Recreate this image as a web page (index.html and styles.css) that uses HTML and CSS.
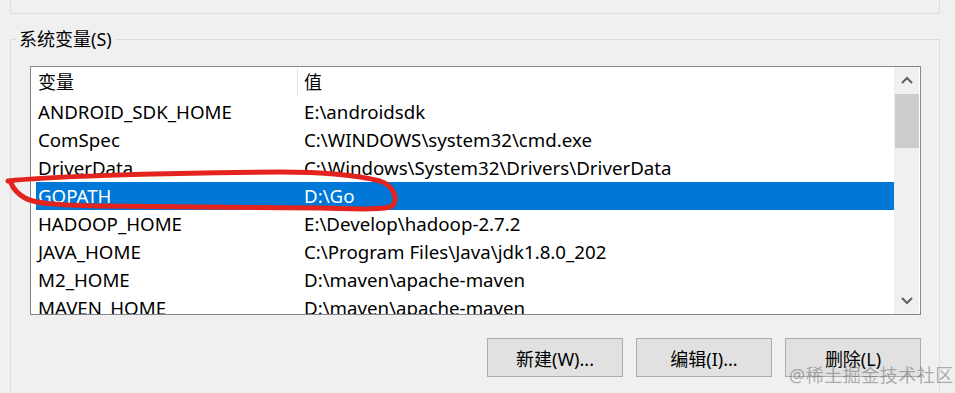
FILE: index.html
```html
<!DOCTYPE html>
<html lang="zh-CN">
<head>
    <meta charset="UTF-8">
    <title>环境变量</title>
    <link rel="stylesheet" href="styles.css">
</head>
<body>

<div class="prev-group"></div>

<fieldset class="group">
    <legend>系统变量(S)</legend>
    <div class="group-body">
        <div class="listbox">
            <div class="list-content">
                <div class="list-header">
                    <div class="hcell">变量</div>
                    <div class="hcell val">值</div>
                </div>
                <div class="row"><div class="cell">ANDROID_SDK_HOME</div><div class="cell">E:\androidsdk</div></div>
                <div class="row"><div class="cell">ComSpec</div><div class="cell">C:\WINDOWS\system32\cmd.exe</div></div>
                <div class="row"><div class="cell">DriverData</div><div class="cell">C:\Windows\System32\Drivers\DriverData</div></div>
                <div class="row selected"><div class="cell">GOPATH</div><div class="cell">D:\Go</div></div>
                <div class="row"><div class="cell">HADOOP_HOME</div><div class="cell">E:\Develop\hadoop-2.7.2</div></div>
                <div class="row"><div class="cell">JAVA_HOME</div><div class="cell">C:\Program Files\Java\jdk1.8.0_202</div></div>
                <div class="row"><div class="cell">M2_HOME</div><div class="cell">D:\maven\apache-maven</div></div>
                <div class="row"><div class="cell">MAVEN_HOME</div><div class="cell">D:\maven\apache-maven</div></div>
            </div>
            <div class="scrollbar">
                <div class="sb-btn">
                    <svg width="12" height="8" viewBox="0 0 12 8"><path d="M1 7 L6 2 L11 7" fill="none" stroke="#606060" stroke-width="2"/></svg>
                </div>
                <div class="sb-thumb"></div>
                <div class="sb-track"></div>
                <div class="sb-btn">
                    <svg width="12" height="8" viewBox="0 0 12 8"><path d="M1 1 L6 6 L11 1" fill="none" stroke="#606060" stroke-width="2"/></svg>
                </div>
            </div>
        </div>

        <div class="buttons">
            <button class="btn">新建(W)...</button>
            <button class="btn">编辑(I)...</button>
            <button class="btn">删除(L)</button>
        </div>
    </div>
</fieldset>

<svg class="mark" width="955" height="393" viewBox="0 0 955 393">
    <path d="M8,181 C40,177 150,173 280,172 C330,172 360,176 380,181 C395,186 398,200 392,206 C385,210 360,209 320,208 L100,206 C60,205 35,204 25,198 C18,194 13,188 11,183" fill="none" stroke="#e3231e" stroke-width="5" stroke-linecap="round" stroke-linejoin="round"/>
</svg>

<div class="watermark">@稀土掘金技术社区</div>

</body>
</html>
```

FILE: styles.css
```css
body {
    margin: 0;
    background: #f0f0f0;
    font-family: "Noto Sans", "Noto Sans CJK SC", sans-serif;
    color: #000;
    overflow: hidden;
    height: 393px;
}
.prev-group {
    margin-left: 10px;
    width: 928px;
    height: 13px;
    border: 1px solid #dcdcdc;
    border-top: none;
}
.group {
    margin: 13px 0 0 10px;
    width: 930px;
    box-sizing: border-box;
    padding: 0;
    border: 1px solid #dcdcdc;
    border-bottom: none;
    height: 366px;
    min-inline-size: 0;
}
.group legend {
    margin-left: 5px;
    padding: 0 3px;
    font-size: 18px;
    line-height: 24px;
    color: #000;
}
.group-body {
    padding: 15px 18px 0 19px;
}
.listbox {
    display: flex;
    height: 247px;
    border: 1px solid #828790;
    background: #fff;
}
.list-content {
    flex: 1;
    overflow: hidden;
}
.list-header {
    display: grid;
    grid-template-columns: 266px 1fr;
    height: 31px;
    align-items: center;
    font-size: 18px;
}
.hcell {
    padding-left: 7px;
    line-height: 29px;
}
.hcell.val {
    border-left: 1px solid #e5e5e5;
    padding-left: 6px;
}
.row {
    display: grid;
    grid-template-columns: 266px 1fr;
    height: 28px;
    margin-left: 5px;
    align-items: center;
    font-size: 18.7px;
    white-space: nowrap;
}
.cell {
    padding-left: 2px;
    line-height: 28px;
}
.row.selected {
    background: #0078d7;
    color: #fff;
}
.scrollbar {
    width: 25px;
    margin-right: 1px;
    display: flex;
    flex-direction: column;
    background: #f0f0f0;
}
.sb-btn {
    height: 26px;
    display: flex;
    align-items: center;
    justify-content: center;
}
.sb-thumb {
    height: 54px;
    margin: 1px 0 0 1px;
    background: #cdcdcd;
}
.sb-track {
    flex: 1;
}
.buttons {
    display: flex;
    justify-content: flex-end;
    gap: 13px;
    margin-top: 23px;
}
.btn {
    width: 136px;
    height: 39px;
    background: #e1e1e1;
    border: 1px solid #adadad;
    font-family: inherit;
    font-size: 18px;
    color: #000;
    padding: 0;
}
.mark {
    position: absolute;
    top: 0;
    left: 0;
    pointer-events: none;
}
.watermark {
    position: absolute;
    left: 789px;
    top: 363px;
    font-size: 18px;
    line-height: 24px;
    color: rgba(110, 110, 110, 0.55);
    letter-spacing: 0.5px;
}
```
